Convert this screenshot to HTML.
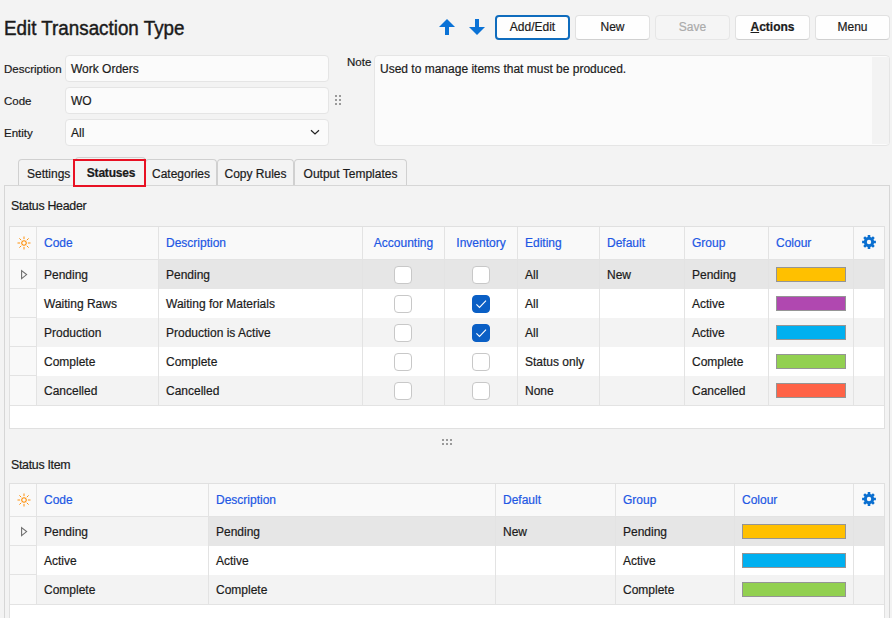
<!DOCTYPE html><html><head><meta charset="utf-8"><style>
*{margin:0;padding:0;box-sizing:border-box}
html,body{width:892px;height:618px;overflow:hidden;background:#f3f3f3;position:relative;font-family:"Liberation Sans",sans-serif;color:#1b1b1b}
.t{position:absolute;white-space:nowrap;line-height:normal;-webkit-text-stroke:0.2px currentColor}
.btn{position:absolute;top:15px;width:75px;height:25px;background:#fefefe;border:1px solid #e1e1e1;border-bottom-color:#d0d0d0;border-radius:4px}
.btn.prim{border:2px solid #0f6cbd}
.btn.dis{background:#f5f5f5;border-color:#e6e6e6}
.inp{position:absolute;left:65px;width:264px;height:27px;background:#fbfbfb;border:1px solid #e5e5e5;border-radius:4px}
.note{position:absolute;left:374px;top:55px;width:516px;height:91px;background:#fbfbfb;border:1px solid #e5e5e5;border-radius:4px}
.note .sb{position:absolute;right:0;top:1px;width:17px;bottom:1px;background:#f3f3f3}
.dot{position:absolute;z-index:5;width:2px;height:2px;background:#9a9a9a}
.panel{position:absolute;left:4px;top:185px;width:886px;height:500px;border:1px solid #d6d6d6;background:#f3f3f3}
.tab{position:absolute;top:159px;height:26px;border:1px solid #d0d0d0;border-bottom:none;border-radius:4px 4px 0 0;background:#f3f3f3}
.tabsel{position:absolute;left:73px;top:159px;width:73px;height:28px;border:2px solid #e81123;background:#f3f3f3}
.grid{position:absolute;background:#fff;border:1px solid #e0e0e0}
.hl{position:absolute;height:1px;background:#e3e3e3}
.vl{position:absolute;width:1px;background:#e3e3e3}
.cb{position:absolute;width:18px;height:18px;border:1px solid #c8c8c8;border-radius:4px;background:#fff}
.cb.on{background:#0a5fc5;border-color:#0a5fc5}
.cb svg{position:absolute;left:-1px;top:-1px}
.sw{position:absolute;height:15px;border:1px solid #959595}
</style></head><body><div class="t" style="left:4px;top:16.90px;font-size:20px;font-weight:400;color:#1b1b1b;transform-origin:0 0;transform:scaleX(0.94);-webkit-text-stroke:0.45px #1b1b1b;">Edit Transaction Type</div>
<svg style="position:absolute;left:0;top:0" width="892" height="618">
<path d="M447 19 L455 27 L449 27 L449 35 L445 35 L445 27 L439 27 Z" fill="#0a72d6"/>
<path d="M475 19 L479 19 L479 27 L485 27 L477 35 L469 27 L475 27 Z" fill="#0a72d6"/>
</svg>
<div class="btn prim" style="left:495px"></div>
<div class="t" style="left:495px;top:20.14px;font-size:12px;font-weight:400;color:#1b1b1b;width:75px;text-align:center;">Add/Edit</div>
<div class="btn " style="left:575px"></div>
<div class="t" style="left:575px;top:20.14px;font-size:12px;font-weight:400;color:#1b1b1b;width:75px;text-align:center;">New</div>
<div class="btn dis" style="left:655px"></div>
<div class="t" style="left:655px;top:20.14px;font-size:12px;font-weight:400;color:#ababab;width:75px;text-align:center;">Save</div>
<div class="btn bold" style="left:735px"></div>
<div class="t" style="left:735px;top:20.14px;font-size:12px;font-weight:700;color:#1b1b1b;width:75px;text-align:center;"><u>A</u>ctions</div>
<div class="btn " style="left:815px"></div>
<div class="t" style="left:815px;top:20.14px;font-size:12px;font-weight:400;color:#1b1b1b;width:75px;text-align:center;">Menu</div>
<div class="t" style="left:4px;top:62.59px;font-size:11.5px;font-weight:400;color:#1b1b1b;">Description</div>
<div class="inp" style="top:55px"></div>
<div class="t" style="left:71px;top:62.14px;font-size:12px;font-weight:400;color:#1b1b1b;">Work Orders</div>
<div class="t" style="left:4px;top:94.59px;font-size:11.5px;font-weight:400;color:#1b1b1b;">Code</div>
<div class="inp" style="top:87px"></div>
<div class="t" style="left:71px;top:94.14px;font-size:12px;font-weight:400;color:#1b1b1b;">WO</div>
<div class="t" style="left:4px;top:126.59px;font-size:11.5px;font-weight:400;color:#1b1b1b;">Entity</div>
<div class="inp" style="top:119px"></div>
<div class="t" style="left:71px;top:126.14px;font-size:12px;font-weight:400;color:#1b1b1b;">All</div>
<svg style="position:absolute;left:0;top:0" width="892" height="618"><path d="M311 130.3 L315 134 L319 130.3" stroke="#222" stroke-width="1.2" fill="none"/></svg>
<div class="dot" style="left:335px;top:95px"></div><div class="dot" style="left:339px;top:95px"></div><div class="dot" style="left:335px;top:99px"></div><div class="dot" style="left:339px;top:99px"></div><div class="dot" style="left:335px;top:103px"></div><div class="dot" style="left:339px;top:103px"></div><div class="dot" style="left:442px;top:439px"></div><div class="dot" style="left:442px;top:443px"></div><div class="dot" style="left:446px;top:439px"></div><div class="dot" style="left:446px;top:443px"></div><div class="dot" style="left:450px;top:439px"></div><div class="dot" style="left:450px;top:443px"></div>
<div class="t" style="left:347px;top:55.59px;font-size:11.5px;font-weight:400;color:#1b1b1b;">Note</div>
<div class="note"><div class="sb"></div></div>
<div class="t" style="left:380px;top:62.14px;font-size:12px;font-weight:400;color:#1b1b1b;">Used to manage items that must be produced.</div>
<div class="panel"></div>
<div class="tab" style="left:18px;width:59px"></div>
<div class="t" style="left:27px;top:167.14px;font-size:12px;font-weight:400;color:#1b1b1b;">Settings</div>
<div class="tab" style="left:145px;width:72px"></div>
<div class="t" style="left:145px;top:167.14px;font-size:12px;font-weight:400;color:#1b1b1b;width:72px;text-align:center;">Categories</div>
<div class="tab" style="left:217px;width:77px"></div>
<div class="t" style="left:217px;top:167.14px;font-size:12px;font-weight:400;color:#1b1b1b;width:77px;text-align:center;">Copy Rules</div>
<div class="tab" style="left:294px;width:113px"></div>
<div class="t" style="left:294px;top:167.14px;font-size:12px;font-weight:400;color:#1b1b1b;width:113px;text-align:center;">Output Templates</div>
<div class="tab" style="left:75px;top:157px;width:71px;height:6px"></div><div class="tabsel"></div>
<div class="t" style="left:74.5px;top:166.14px;font-size:12px;font-weight:700;color:#1b1b1b;width:73px;text-align:center;letter-spacing:-0.2px;">Statuses</div>
<div class="t" style="left:11px;top:198.98px;font-size:12.4px;font-weight:400;color:#1b1b1b;letter-spacing:-0.3px;">Status Header</div>
<div class="t" style="left:11px;top:457.98px;font-size:12.4px;font-weight:400;color:#1b1b1b;letter-spacing:-0.3px;">Status Item</div>
<div class="grid" style="left:9px;top:226px;width:876px;height:203px"></div>
<div style="position:absolute;background:#f9f9f9;left:10px;top:227px;width:874px;height:32px"></div>
<div style="position:absolute;left:37px;top:260px;width:847px;height:29px;background:#e6e6e6"></div>
<div style="position:absolute;left:37px;top:260px;width:121px;height:29px;background:#f3f3f3"></div>
<div style="position:absolute;left:37px;top:289px;width:847px;height:29px;background:#ffffff"></div>
<div style="position:absolute;left:37px;top:318px;width:847px;height:29px;background:#f3f3f3"></div>
<div style="position:absolute;left:37px;top:347px;width:847px;height:29px;background:#ffffff"></div>
<div style="position:absolute;left:37px;top:376px;width:847px;height:29px;background:#f3f3f3"></div>
<div style="position:absolute;left:10px;top:260px;width:26px;height:145px;background:#f9f9f9"></div>
<div class="hl" style="left:10px;top:259px;width:874px"></div>
<div class="hl" style="left:10px;top:405px;width:874px"></div>
<div class="hl" style="left:10px;top:288px;width:26px"></div>
<div class="hl" style="left:10px;top:317px;width:26px"></div>
<div class="hl" style="left:10px;top:346px;width:26px"></div>
<div class="hl" style="left:10px;top:375px;width:26px"></div>
<div class="vl" style="left:36px;top:227px;height:178px"></div>
<div class="vl" style="left:158px;top:227px;height:178px"></div>
<div class="vl" style="left:362px;top:227px;height:178px"></div>
<div class="vl" style="left:444px;top:227px;height:178px"></div>
<div class="vl" style="left:517px;top:227px;height:178px"></div>
<div class="vl" style="left:599px;top:227px;height:178px"></div>
<div class="vl" style="left:684px;top:227px;height:178px"></div>
<div class="vl" style="left:768px;top:227px;height:178px"></div>
<div class="vl" style="left:853px;top:227px;height:178px"></div>
<svg style="position:absolute;left:15.5px;top:234.6px" width="16" height="16" viewBox="-8 -8 16 16"><circle r="2.3" fill="none" stroke="#ff8c00" stroke-width="1.05"/><line x1="3.90" y1="0.00" x2="6.50" y2="0.00" stroke="#ff8c00" stroke-width="0.95"/><line x1="2.76" y1="2.76" x2="4.60" y2="4.60" stroke="#ff8c00" stroke-width="0.95"/><line x1="0.00" y1="3.90" x2="0.00" y2="6.50" stroke="#ff8c00" stroke-width="0.95"/><line x1="-2.76" y1="2.76" x2="-4.60" y2="4.60" stroke="#ff8c00" stroke-width="0.95"/><line x1="-3.90" y1="0.00" x2="-6.50" y2="0.00" stroke="#ff8c00" stroke-width="0.95"/><line x1="-2.76" y1="-2.76" x2="-4.60" y2="-4.60" stroke="#ff8c00" stroke-width="0.95"/><line x1="-0.00" y1="-3.90" x2="-0.00" y2="-6.50" stroke="#ff8c00" stroke-width="0.95"/><line x1="2.76" y1="-2.76" x2="4.60" y2="-4.60" stroke="#ff8c00" stroke-width="0.95"/></svg>
<svg style="position:absolute;left:861px;top:234px" width="16" height="16" viewBox="-8 -8 16 16"><path d="M5.03 -1.34 L6.89 -1.25 L6.89 1.25 L5.03 1.34 L4.50 2.61 L5.76 3.98 L3.98 5.76 L2.61 4.50 L1.34 5.03 L1.25 6.89 L-1.25 6.89 L-1.34 5.03 L-2.61 4.50 L-3.98 5.76 L-5.76 3.98 L-4.50 2.61 L-5.03 1.34 L-6.89 1.25 L-6.89 -1.25 L-5.03 -1.34 L-4.50 -2.61 L-5.76 -3.98 L-3.98 -5.76 L-2.61 -4.50 L-1.34 -5.03 L-1.25 -6.89 L1.25 -6.89 L1.34 -5.03 L2.61 -4.50 L3.98 -5.76 L5.76 -3.98 L4.50 -2.61 Z" fill="#0a6fd0"/><circle r="2.2" fill="#f9f9f9"/></svg>
<div class="t" style="left:44px;top:236.14px;font-size:12px;font-weight:400;color:#2157e4;">Code</div>
<div class="t" style="left:166px;top:236.14px;font-size:12px;font-weight:400;color:#2157e4;">Description</div>
<div class="t" style="left:362px;top:236.14px;font-size:12px;font-weight:400;color:#2157e4;width:83px;text-align:center;">Accounting</div>
<div class="t" style="left:444px;top:236.14px;font-size:12px;font-weight:400;color:#2157e4;width:74px;text-align:center;">Inventory</div>
<div class="t" style="left:525px;top:236.14px;font-size:12px;font-weight:400;color:#2157e4;">Editing</div>
<div class="t" style="left:607px;top:236.14px;font-size:12px;font-weight:400;color:#2157e4;">Default</div>
<div class="t" style="left:692px;top:236.14px;font-size:12px;font-weight:400;color:#2157e4;">Group</div>
<div class="t" style="left:776px;top:236.14px;font-size:12px;font-weight:400;color:#2157e4;">Colour</div>
<svg style="position:absolute;left:20px;top:269px" width="8" height="11"><path d="M1.6 1.6 L6.6 5.6 L1.6 9.6 Z" fill="none" stroke="#6e6e6e" stroke-width="1.1"/></svg>
<div class="t" style="left:44px;top:268.14px;font-size:12px;font-weight:400;color:#1b1b1b;">Pending</div>
<div class="t" style="left:166px;top:268.14px;font-size:12px;font-weight:400;color:#1b1b1b;">Pending</div>
<div class="cb" style="left:394px;top:266px"></div>
<div class="cb" style="left:472px;top:266px"></div>
<div class="t" style="left:525px;top:268.14px;font-size:12px;font-weight:400;color:#1b1b1b;">All</div>
<div class="t" style="left:607px;top:268.14px;font-size:12px;font-weight:400;color:#1b1b1b;">New</div>
<div class="t" style="left:692px;top:268.14px;font-size:12px;font-weight:400;color:#1b1b1b;">Pending</div>
<div class="sw" style="left:776px;top:267px;width:70px;background:#ffc000"></div>
<div class="t" style="left:44px;top:297.14px;font-size:12px;font-weight:400;color:#1b1b1b;">Waiting Raws</div>
<div class="t" style="left:166px;top:297.14px;font-size:12px;font-weight:400;color:#1b1b1b;">Waiting for Materials</div>
<div class="cb" style="left:394px;top:295px"></div>
<div class="cb on" style="left:472px;top:295px"><svg width="18" height="18"><path d="M4.4 9.4 L7.5 12.4 L14 5.6" stroke="#fff" stroke-width="1.1" fill="none"/></svg></div>
<div class="t" style="left:525px;top:297.14px;font-size:12px;font-weight:400;color:#1b1b1b;">All</div>
<div class="t" style="left:692px;top:297.14px;font-size:12px;font-weight:400;color:#1b1b1b;">Active</div>
<div class="sw" style="left:776px;top:296px;width:70px;background:#b048b0"></div>
<div class="t" style="left:44px;top:326.14px;font-size:12px;font-weight:400;color:#1b1b1b;">Production</div>
<div class="t" style="left:166px;top:326.14px;font-size:12px;font-weight:400;color:#1b1b1b;">Production is Active</div>
<div class="cb" style="left:394px;top:324px"></div>
<div class="cb on" style="left:472px;top:324px"><svg width="18" height="18"><path d="M4.4 9.4 L7.5 12.4 L14 5.6" stroke="#fff" stroke-width="1.1" fill="none"/></svg></div>
<div class="t" style="left:525px;top:326.14px;font-size:12px;font-weight:400;color:#1b1b1b;">All</div>
<div class="t" style="left:692px;top:326.14px;font-size:12px;font-weight:400;color:#1b1b1b;">Active</div>
<div class="sw" style="left:776px;top:325px;width:70px;background:#00b0f0"></div>
<div class="t" style="left:44px;top:355.14px;font-size:12px;font-weight:400;color:#1b1b1b;">Complete</div>
<div class="t" style="left:166px;top:355.14px;font-size:12px;font-weight:400;color:#1b1b1b;">Complete</div>
<div class="cb" style="left:394px;top:353px"></div>
<div class="cb" style="left:472px;top:353px"></div>
<div class="t" style="left:525px;top:355.14px;font-size:12px;font-weight:400;color:#1b1b1b;">Status only</div>
<div class="t" style="left:692px;top:355.14px;font-size:12px;font-weight:400;color:#1b1b1b;">Complete</div>
<div class="sw" style="left:776px;top:354px;width:70px;background:#92d050"></div>
<div class="t" style="left:44px;top:384.14px;font-size:12px;font-weight:400;color:#1b1b1b;">Cancelled</div>
<div class="t" style="left:166px;top:384.14px;font-size:12px;font-weight:400;color:#1b1b1b;">Cancelled</div>
<div class="cb" style="left:394px;top:382px"></div>
<div class="cb" style="left:472px;top:382px"></div>
<div class="t" style="left:525px;top:384.14px;font-size:12px;font-weight:400;color:#1b1b1b;">None</div>
<div class="t" style="left:692px;top:384.14px;font-size:12px;font-weight:400;color:#1b1b1b;">Cancelled</div>
<div class="sw" style="left:776px;top:383px;width:70px;background:#ff6347"></div>
<div class="grid" style="left:9px;top:483px;width:876px;height:158px"></div>
<div style="position:absolute;background:#f9f9f9;left:10px;top:484px;width:874px;height:32px"></div>
<div style="position:absolute;left:37px;top:517px;width:847px;height:29px;background:#e6e6e6"></div>
<div style="position:absolute;left:37px;top:517px;width:171px;height:29px;background:#f3f3f3"></div>
<div style="position:absolute;left:37px;top:546px;width:847px;height:29px;background:#ffffff"></div>
<div style="position:absolute;left:37px;top:575px;width:847px;height:29px;background:#f3f3f3"></div>
<div style="position:absolute;left:10px;top:517px;width:26px;height:87px;background:#f9f9f9"></div>
<div class="hl" style="left:10px;top:516px;width:874px"></div>
<div class="hl" style="left:10px;top:604px;width:874px"></div>
<div class="hl" style="left:10px;top:545px;width:26px"></div>
<div class="hl" style="left:10px;top:574px;width:26px"></div>
<div class="vl" style="left:36px;top:484px;height:120px"></div>
<div class="vl" style="left:208px;top:484px;height:120px"></div>
<div class="vl" style="left:495px;top:484px;height:120px"></div>
<div class="vl" style="left:615px;top:484px;height:120px"></div>
<div class="vl" style="left:734px;top:484px;height:120px"></div>
<div class="vl" style="left:853px;top:484px;height:120px"></div>
<svg style="position:absolute;left:15.5px;top:491.6px" width="16" height="16" viewBox="-8 -8 16 16"><circle r="2.3" fill="none" stroke="#ff8c00" stroke-width="1.05"/><line x1="3.90" y1="0.00" x2="6.50" y2="0.00" stroke="#ff8c00" stroke-width="0.95"/><line x1="2.76" y1="2.76" x2="4.60" y2="4.60" stroke="#ff8c00" stroke-width="0.95"/><line x1="0.00" y1="3.90" x2="0.00" y2="6.50" stroke="#ff8c00" stroke-width="0.95"/><line x1="-2.76" y1="2.76" x2="-4.60" y2="4.60" stroke="#ff8c00" stroke-width="0.95"/><line x1="-3.90" y1="0.00" x2="-6.50" y2="0.00" stroke="#ff8c00" stroke-width="0.95"/><line x1="-2.76" y1="-2.76" x2="-4.60" y2="-4.60" stroke="#ff8c00" stroke-width="0.95"/><line x1="-0.00" y1="-3.90" x2="-0.00" y2="-6.50" stroke="#ff8c00" stroke-width="0.95"/><line x1="2.76" y1="-2.76" x2="4.60" y2="-4.60" stroke="#ff8c00" stroke-width="0.95"/></svg>
<svg style="position:absolute;left:861px;top:491px" width="16" height="16" viewBox="-8 -8 16 16"><path d="M5.03 -1.34 L6.89 -1.25 L6.89 1.25 L5.03 1.34 L4.50 2.61 L5.76 3.98 L3.98 5.76 L2.61 4.50 L1.34 5.03 L1.25 6.89 L-1.25 6.89 L-1.34 5.03 L-2.61 4.50 L-3.98 5.76 L-5.76 3.98 L-4.50 2.61 L-5.03 1.34 L-6.89 1.25 L-6.89 -1.25 L-5.03 -1.34 L-4.50 -2.61 L-5.76 -3.98 L-3.98 -5.76 L-2.61 -4.50 L-1.34 -5.03 L-1.25 -6.89 L1.25 -6.89 L1.34 -5.03 L2.61 -4.50 L3.98 -5.76 L5.76 -3.98 L4.50 -2.61 Z" fill="#0a6fd0"/><circle r="2.2" fill="#f9f9f9"/></svg>
<div class="t" style="left:44px;top:493.14px;font-size:12px;font-weight:400;color:#2157e4;">Code</div>
<div class="t" style="left:216px;top:493.14px;font-size:12px;font-weight:400;color:#2157e4;">Description</div>
<div class="t" style="left:503px;top:493.14px;font-size:12px;font-weight:400;color:#2157e4;">Default</div>
<div class="t" style="left:623px;top:493.14px;font-size:12px;font-weight:400;color:#2157e4;">Group</div>
<div class="t" style="left:742px;top:493.14px;font-size:12px;font-weight:400;color:#2157e4;">Colour</div>
<svg style="position:absolute;left:20px;top:526px" width="8" height="11"><path d="M1.6 1.6 L6.6 5.6 L1.6 9.6 Z" fill="none" stroke="#6e6e6e" stroke-width="1.1"/></svg>
<div class="t" style="left:44px;top:525.14px;font-size:12px;font-weight:400;color:#1b1b1b;">Pending</div>
<div class="t" style="left:216px;top:525.14px;font-size:12px;font-weight:400;color:#1b1b1b;">Pending</div>
<div class="t" style="left:503px;top:525.14px;font-size:12px;font-weight:400;color:#1b1b1b;">New</div>
<div class="t" style="left:623px;top:525.14px;font-size:12px;font-weight:400;color:#1b1b1b;">Pending</div>
<div class="sw" style="left:742px;top:524px;width:104px;background:#ffc000"></div>
<div class="t" style="left:44px;top:554.14px;font-size:12px;font-weight:400;color:#1b1b1b;">Active</div>
<div class="t" style="left:216px;top:554.14px;font-size:12px;font-weight:400;color:#1b1b1b;">Active</div>
<div class="t" style="left:623px;top:554.14px;font-size:12px;font-weight:400;color:#1b1b1b;">Active</div>
<div class="sw" style="left:742px;top:553px;width:104px;background:#00b0f0"></div>
<div class="t" style="left:44px;top:583.14px;font-size:12px;font-weight:400;color:#1b1b1b;">Complete</div>
<div class="t" style="left:216px;top:583.14px;font-size:12px;font-weight:400;color:#1b1b1b;">Complete</div>
<div class="t" style="left:623px;top:583.14px;font-size:12px;font-weight:400;color:#1b1b1b;">Complete</div>
<div class="sw" style="left:742px;top:582px;width:104px;background:#92d050"></div></body></html>
